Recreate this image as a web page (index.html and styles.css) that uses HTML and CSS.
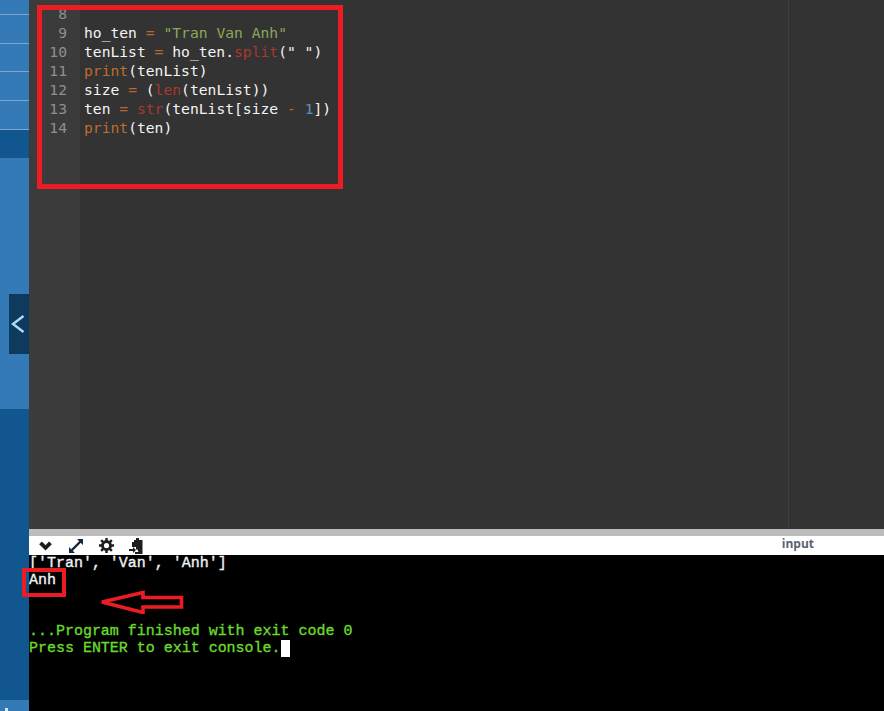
FILE: index.html
```html
<!DOCTYPE html>
<html lang="en">
<head>
<meta charset="utf-8">
<title>Python console</title>
<link rel="stylesheet" href="styles.css">
</head>
<body>
<div class="app">
  <aside class="sidebar">
    <div class="nav-item h14"></div>
    <div class="nav-item h29"></div>
    <div class="nav-item h28"></div>
    <div class="nav-item h29"></div>
    <div class="nav-item h29"></div>
    <div class="nav-active"></div>
    <div class="nav-fill"></div>
    <div class="nav-dark"></div>
    <div class="nav-foot"><span class="foot-mark"></span></div>
    <button class="collapse" aria-label="Collapse">
      <svg width="14" height="18" viewBox="0 0 14 18"><path d="M12.500 1 2 9l10.500 8" fill="none" stroke="#a9dcff" stroke-width="2.400"/></svg>
    </button>
  </aside>
  <main class="main">
    <section class="editor">
      <div class="gutter">
        <div>8</div><div>9</div><div>10</div><div>11</div><div>12</div><div>13</div><div>14</div>
      </div>
      <div class="code">
        <div class="line">&nbsp;</div>
        <div class="line">ho_ten <span class="op">=</span> <span class="str">"Tran Van Anh"</span></div>
        <div class="line">tenList <span class="op">=</span> ho_ten.<span class="fn">split</span>(<span class="str-w">" "</span>)</div>
        <div class="line"><span class="kw">print</span>(tenList)</div>
        <div class="line">size <span class="op">=</span> (<span class="fn">len</span>(tenList))</div>
        <div class="line">ten <span class="op">=</span> <span class="fn">str</span>(tenList[size <span class="op">-</span> <span class="num">1</span>])</div>
        <div class="line"><span class="kw">print</span>(ten)</div>
      </div>
      <div class="print-margin"></div>
    </section>
    <div class="divider"></div>
    <div class="toolbar">
      <div class="tools">
        <svg class="tool" width="15" height="12" viewBox="0 0 15 12"><path d="M2.500 2.800 7.500 7.800l5-5" fill="none" stroke="#1c1c1c" stroke-width="3.800"/></svg>
        <svg class="tool" width="16" height="16" viewBox="0 0 16 16"><path d="M3 13 13 3" stroke="#14283c" stroke-width="2.400"/><path d="M9 1h6v6zM1 9v6h6z" fill="#14283c"/></svg>
        <svg class="tool" width="15" height="15" viewBox="0 0 16 16"><circle cx="8" cy="8" r="4.300" fill="none" stroke="#1c1c1c" stroke-width="3"/><path d="M8 0v3M8 13v3M0 8h3M13 8h3M2.300 2.300l2.100 2.100M11.600 11.600l2.100 2.100M2.300 13.700l2.100-2.100M11.600 4.400l2.100-2.100" stroke="#1c1c1c" stroke-width="2.600"/></svg>
        <svg class="tool" width="15" height="16" viewBox="0 0 15 16"><path d="M5 2h2V0h3v2h3.500v14H6v-2h3.500l-1-2.500H7V9H3V4h2z" fill="#1c1c1c"/><path d="M0 11h4V9l3 3-3 3v-2H0z" fill="#1c1c1c"/></svg>
      </div>
      <span class="input-label">input</span>
    </div>
    <pre class="terminal"><span class="out">['Tran', 'Van', 'Anh']
Anh


</span><span class="ok">...Program finished with exit code 0
Press ENTER to exit console.</span><span class="cursor"></span></pre>
  </main>
</div>
<div class="mark mark-code"></div>
<div class="mark mark-out"></div>
<svg class="mark-arrow" width="84" height="24" viewBox="0 0 84 24"><path d="M2 12 43 2.500V7.500H81.500V17H43V22.500Z" fill="none" stroke="#ed1c24" stroke-width="3.600"/></svg>
</body>
</html>
```
FILE: styles.css
```css
* { box-sizing: border-box; }
html, body { margin: 0; height: 100%; overflow: hidden; background: #000; }
.app { display: flex; width: 884px; height: 711px; }

.sidebar { position: relative; width: 29px; flex: none; display: flex; flex-direction: column; background: #337ab7; }
.nav-item { border-bottom: 1px solid #7ba6cf; }
.h14 { height: 15px; }
.h29 { height: 29px; }
.h28 { height: 28px; }
.nav-active { height: 28px; background: #11568f; }
.nav-fill { height: 251px; background: #337ab7; }
.nav-dark { height: 291px; background: #11568f; }
.nav-foot { flex: 1; background: #337ab7; position: relative; }
.foot-mark { display: block; width: 3px; height: 3px; margin: 8px 0 0 5px; background: #cfe6f7; }
.collapse { position: absolute; left: 9px; top: 294px; width: 20px; height: 60px; padding: 0 2px 0 0; border: 0; background: #0f3a60; display: flex; align-items: center; justify-content: center; }

.main { flex: 1; min-width: 0; display: flex; flex-direction: column; }
.editor { position: relative; height: 529px; display: flex; background: #333333; overflow: hidden; font: 14.67px/19px "DejaVu Sans Mono", monospace; padding-top: 4px; }
.gutter { width: 51px; flex: none; margin-top: -4px; padding: 4px 13px 0 0; background: #3b3b3b; color: #8f8f8f; text-align: right; }
.code { padding-left: 4px; color: #f4f4f4; }
.line { height: 19px; white-space: pre; }
.op { color: #b8682c; }
.str { color: #8aa85a; }
.str-w { color: #f4f4f4; }
.fn { color: #a8392c; }
.kw { color: #bf6c2c; }
.num { color: #5f8fb8; }
.print-margin { position: absolute; left: 759px; top: 0; bottom: 0; width: 1px; background: #3f3f3f; }

.divider { height: 7px; background: #bcbcbc; }
.toolbar { height: 19px; background: #fff; display: flex; align-items: center; justify-content: space-between; padding: 0 0 0 9px; }
.tools { display: flex; align-items: center; gap: 15px; }
.tool { display: block; flex: none; }
.input-label { font: bold 12px/16px "Open Sans", sans-serif; color: #5c6270; margin-right: 70px; position: relative; top: -2px; }

.terminal { flex: 1; margin: 0; padding: 0; background: #000; font: 14.97px/17px "Liberation Mono", monospace; -webkit-text-stroke: 0.35px currentColor; overflow: hidden; }
.out { color: #f2f2f2; }
.ok { color: #6ad92f; }
.cursor { display: inline-block; width: 9px; height: 17px; background: #fff; vertical-align: top; }

.mark { position: absolute; border-style: solid; border-color: #ed1c24; }
.mark-code { left: 37px; top: 5px; width: 306px; height: 184px; border-width: 5px; }
.mark-out { left: 22px; top: 568px; width: 44px; height: 29px; border-width: 4px; }
.mark-arrow { position: absolute; left: 100px; top: 590px; }
```
